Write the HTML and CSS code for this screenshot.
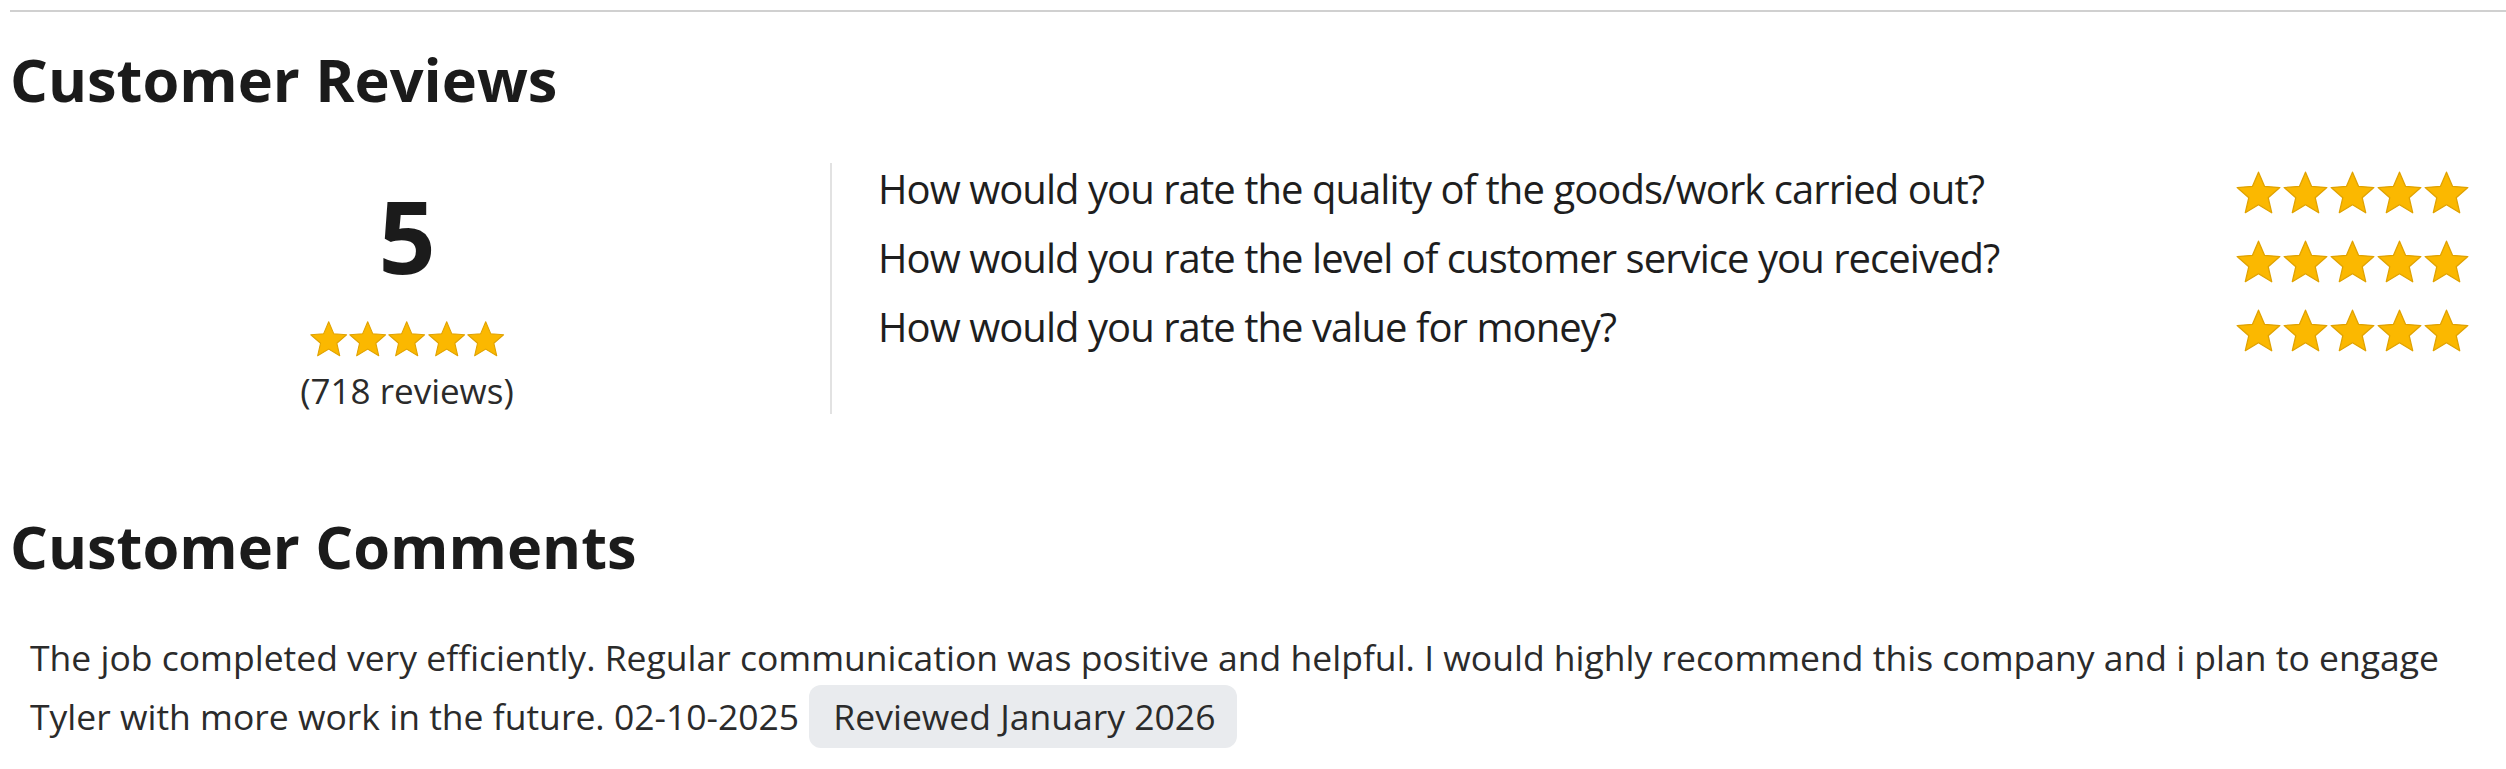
FILE: index.html
```html
<!DOCTYPE html>
<html lang="en">
<head>
    <meta charset="UTF-8">
    <meta name="viewport" content="width=device-width, initial-scale=1.0">
    <title>Customer Reviews</title>
    <link rel="stylesheet" href="styles.css">
</head>
<body>
    <svg class="sprite" aria-hidden="true">
        <symbol id="star" viewBox="1 1 22 22">
            <path d="M12 17.27L18.18 21l-1.64-7.03L22 9.24l-7.19-.61L12 2 9.19 8.63 2 9.24l5.46 4.73L5.82 21z"/>
        </symbol>
    </svg>

    <hr class="rule">

    <section class="reviews">
        <h2 class="section-title">Customer Reviews</h2>
        <div class="summary">
            <div class="overall">
                <div class="overall-score">5</div>
                <div class="stars stars-sm">
                    <svg><use href="#star"/></svg><svg><use href="#star"/></svg><svg><use href="#star"/></svg><svg><use href="#star"/></svg><svg><use href="#star"/></svg>
                </div>
                <div class="overall-count">(718 reviews)</div>
            </div>
            <div class="divider"></div>
            <ul class="questions">
                <li class="question">
                    <span class="question-text">How would you rate the quality of the goods/work carried out?</span>
                    <span class="stars stars-lg"><svg><use href="#star"/></svg><svg><use href="#star"/></svg><svg><use href="#star"/></svg><svg><use href="#star"/></svg><svg><use href="#star"/></svg></span>
                </li>
                <li class="question">
                    <span class="question-text">How would you rate the level of customer service you received?</span>
                    <span class="stars stars-lg"><svg><use href="#star"/></svg><svg><use href="#star"/></svg><svg><use href="#star"/></svg><svg><use href="#star"/></svg><svg><use href="#star"/></svg></span>
                </li>
                <li class="question">
                    <span class="question-text">How would you rate the value for money?</span>
                    <span class="stars stars-lg"><svg><use href="#star"/></svg><svg><use href="#star"/></svg><svg><use href="#star"/></svg><svg><use href="#star"/></svg><svg><use href="#star"/></svg></span>
                </li>
            </ul>
        </div>
    </section>

    <section class="comments">
        <h2 class="section-title comments-title">Customer Comments</h2>
        <p class="comment">The job completed very efficiently. Regular communication was positive and helpful. I would highly recommend this company and i plan to engage Tyler with more work in the future. 02-10-2025 <span class="badge">Reviewed January 2026</span></p>
    </section>
</body>
</html>
```

FILE: styles.css
```css
body {
    margin: 0;
    padding: 0 0 0 10px;
    font-family: 'Open Sans', 'Liberation Sans', sans-serif;
    color: #1c1c1c;
    background-color: #fff;
}

.sprite {
    display: none;
}

.rule {
    margin: 10px 0 0 0;
    border: none;
    border-top: 2px solid #d0d0d0;
    height: 0;
}

.section-title {
    margin: 32px 0 0 0;
    font-size: 59.5px;
    line-height: 70px;
    font-weight: 700;
    color: #1b1b1b;
}

.reviews {
    padding-right: 36px;
}

.summary {
    display: flex;
    margin-top: 43px;
}

/* left column: overall score */
.overall {
    width: 794px;
    padding-top: 3px;
    display: flex;
    flex-direction: column;
    align-items: center;
}

.overall-score {
    font-size: 100px;
    line-height: 150px;
    font-weight: 700;
    color: #1b1b1b;
}

.stars {
    display: flex;
    fill: #fbb800;
    stroke: #e0a200;
    stroke-width: 0.6;
    stroke-linejoin: round;
}

.stars-sm {
    margin-top: 10px;
}

.stars-sm svg {
    width: 39.4px;
    height: 39.4px;
}

.stars-lg svg {
    width: 47px;
    height: 47px;
}

.overall-count {
    margin-top: 8px;
    font-size: 35px;
    line-height: 48px;
    color: #2b2b2b;
}

.divider {
    width: 2px;
    margin: 6px 0 1px 26px;
    background-color: #e2e2e2;
}

/* right column: question ratings */
.questions {
    flex: 1;
    list-style: none;
    margin: -3px 0 0 46px;
    padding: 0;
}

.question {
    display: flex;
    justify-content: space-between;
    align-items: flex-start;
    height: 69px;
}

.question-text {
    font-size: 40px;
    line-height: 69px;
    letter-spacing: -0.95px;
    color: #1e1e1e;
}

.stars-lg {
    margin-top: 16px;
}

.comments-title {
    margin-top: 96px;
}

.comment {
    margin: 48px 0 0 0;
    padding: 0 10px 0 20px;
    font-size: 35.5px;
    line-height: 56px;
    color: #2b2b2b;
}

.badge {
    display: inline-block;
    margin-left: 1px;
    padding: 8px 22px 8px 24px;
    line-height: 47px;
    background-color: #e9ebee;
    border-radius: 12px;
}
```
